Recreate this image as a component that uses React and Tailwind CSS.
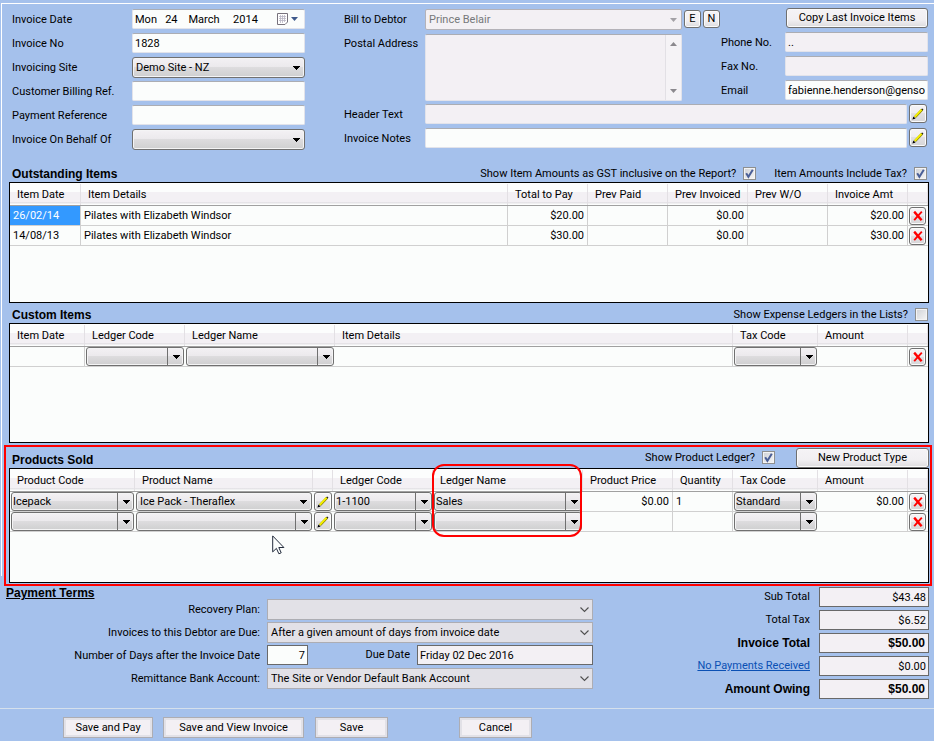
import React, { useState } from "react";

const outstandingItems = [
  { id: 1, date: "26/02/14", details: "Pilates with Elizabeth Windsor", total: "$20.00", invoiced: "$0.00", amount: "$20.00" },
  { id: 2, date: "14/08/13", details: "Pilates with Elizabeth Windsor", total: "$30.00", invoiced: "$0.00", amount: "$30.00" },
];

const products = [
  { id: 1, code: "Icepack", name: "Ice Pack -  Theraflex", ledgerCode: "1-1100", ledgerName: "Sales", price: "$0.00", quantity: "1", tax: "Standard", amount: "$0.00" },
  { id: 2, code: "", name: "", ledgerCode: "", ledgerName: "", price: "", quantity: "", tax: "", amount: "" },
];

const inputClass =
  "block h-5 w-full min-w-0 rounded-[2px] border border-[#e2e3ea] border-t-[#abadb3] px-0.5 outline-none";

const titleClass = "font-['Liberation_Sans',Arial,sans-serif] text-xs font-bold";

// Drop-down with the shaded two-tone face
const Combo = ({ id, label, value, split, tall }) => (
  <div className={`relative w-full ${tall ? "h-[21px]" : "h-[19px]"}`}>
    <select
      id={id}
      aria-label={label}
      defaultValue={value}
      className={`block h-full w-full appearance-none whitespace-pre rounded-[3px] border border-[#707070] bg-[linear-gradient(#f3f1f4_0%,#ebe9ec_49%,#dddcde_50%,#cfcfd0_100%)] shadow-[inset_0_0_0_1px_#f4f4f5] outline-none ${
        split ? "px-px" : "px-[3px]"
      }`}
    >
      <option value={value}>{value}</option>
    </select>
    <span
      className={`pointer-events-none absolute inset-y-0 right-0 flex w-[17px] items-center justify-center ${
        split ? "border-l border-[#707070]" : ""
      }`}
    >
      <svg width="7" height="4" viewBox="0 0 7 4" shapeRendering="crispEdges">
        <path d="M0 0h7v1H6v1H5v1H4v1H3V3H2V2H1V1H0z" fill="#000" />
      </svg>
    </span>
  </div>
);

// Flat grey drop-down used by the payment terms
const FlatSelect = ({ id, value }) => (
  <div className="relative h-[21px] w-[326px]">
    <select
      id={id}
      defaultValue={value}
      className="block h-full w-full appearance-none border border-[#adadb3] bg-[#e2e1e7] px-[3px] outline-none"
    >
      <option value={value}>{value}</option>
    </select>
    <svg className="pointer-events-none absolute top-[8px] right-[4px]" width="9" height="6" viewBox="0 0 9 6">
      <path d="M.5 .5l4 4 4-4" fill="none" stroke="#505050" strokeWidth="1.1" />
    </svg>
  </div>
);

const CheckBox = ({ label, checked }) => {
  const [on, setOn] = useState(checked);
  return (
    <label className="flex items-center gap-[7px]">
      {label}
      <span className="relative block h-[13px] w-[13px]">
        <input
          type="checkbox"
          checked={on}
          onChange={() => setOn(!on)}
          className="block h-full w-full appearance-none border border-[#8e8f8f] bg-[linear-gradient(135deg,#cfd1d6,#f6f6f6)] shadow-[inset_0_0_0_1px_#f4f4f4]"
        />
        {on && (
          <svg className="pointer-events-none absolute inset-0" width="13" height="13" viewBox="0 0 13 13">
            <path d="M3.2 6.2l2.2 3.6L9.8 2.8" fill="none" stroke="#4a5f97" strokeWidth="2" />
          </svg>
        )}
      </span>
    </label>
  );
};

const smallButton =
  "flex items-center justify-center rounded-[3px] border border-[#707070] bg-[linear-gradient(#f5f3f6_0%,#efedf0_49%,#e2e0e3_50%,#d6d6d8_100%)] shadow-[inset_0_0_0_1px_#fbfbfb]";

const plainButton =
  "rounded-[3px] border border-[#707070] bg-[linear-gradient(#f5f3f6_0%,#f1eff2_60%,#dddcde_100%)] shadow-[inset_0_0_0_1px_#fbfbfb]";

const EditButton = ({ label }) => (
  <button aria-label={label} className={`${smallButton} h-[19px] w-[18px] shrink-0`}>
    <svg width="12" height="12" viewBox="0 0 12 12">
      <path d="M3 9.2L10.2 1.600" stroke="#8a8400" strokeWidth="2.4" />
      <path d="M2.800 8.800L9.600 1.600" stroke="#f6f000" strokeWidth="1.800" />
      <path d="M.4 11.6l1-3 2.200 2z" fill="#000" />
      <path d="M9.800 .8l1.200 1.200" stroke="#222" strokeWidth="1.200" />
    </svg>
  </button>
);

const DeleteButton = () => (
  <button aria-label="Delete row" className={`${smallButton} mt-px h-[18px] w-[17px]`}>
    <svg width="10" height="10" viewBox="0 0 10 10">
      <path d="M1.2 .6L8.6 9.2" stroke="#ff0000" strokeWidth="2.4" />
      <path d="M8.8 .6L1.2 9.2" stroke="#ff0000" strokeWidth="1.8" />
    </svg>
  </button>
);

const Th = ({ children }) => (
  <th className="h-[23px] border-b border-[#a0a0a0] bg-[linear-gradient(#fcfdfd_0%,#fcfdfd_42%,#f3f0f4_43%,#f3f0f4_88%,#dedce0_89%,#fcfdfd_96%)] p-0 text-left font-normal">
    <div className="flex h-[21px] items-center border-r border-[#e3e0e4] pt-0.5 pl-[7px] whitespace-nowrap">{children}</div>
  </th>
);

const Td = ({ children, className = "" }) => (
  <td className={`h-5 border-r border-b border-[#d0d0d0] px-[3px] py-0 whitespace-nowrap ${className}`}>{children}</td>
);

// Cell whose control fills it from edge to edge
const ControlTd = ({ children }) => <td className="h-5 border-b border-[#d0d0d0] py-0 pr-px pl-px align-top">{children}</td>;

const Grid = ({ widths, className, children }) => (
  <div className={`overflow-hidden border border-black bg-[#fbfdfc] ${className}`}>
    <table className="w-full table-fixed border-separate border-spacing-0">
      <colgroup>
        {widths.map((w, i) => (
          <col key={i} className={w} />
        ))}
      </colgroup>
      {children}
    </table>
  </div>
);

const Field = ({ id, label, children }) => (
  <div className="flex h-6 items-start">
    <label htmlFor={id} className="w-[120px] shrink-0 leading-[22px]">
      {label}
    </label>
    <div className="relative w-[173px]">{children}</div>
  </div>
);

const InvoiceForm = () => (
  <div className="flex gap-[39px] pt-[5px] pr-[7px] pl-2.5">
    <div className="shrink-0">
      <Field id="date" label="Invoice Date">
        <input id="date" defaultValue="Mon   24    March     2014" className={`${inputClass} bg-[#fbfdfc]`} />
        <span className="pointer-events-none absolute top-[4px] right-[7px] flex items-center gap-[3px]">
          <svg width="11" height="12" viewBox="0 0 11 12">
            <path d="M.5 .5h10v8.500l-2.500 2.500H.5z" fill="#fff" stroke="#77727c" />
            <path d="M2 3.500h7M2 5.500h7M2 7.500h7M3.500 2v8M5.500 2v8M7.500 2v7" stroke="#b9b6c4" strokeWidth=".8" />
          </svg>
          <svg width="7" height="4" viewBox="0 0 7 4">
            <path d="M0 0h7L3.500 4z" fill="#3f5a8c" />
          </svg>
        </span>
      </Field>
      <Field id="number" label="Invoice No">
        <input id="number" defaultValue="1828" className={`${inputClass} bg-[#fbfdfc]`} />
      </Field>
      <Field id="site" label="Invoicing Site">
        <Combo id="site" value="Demo Site - NZ" tall />
      </Field>
      <Field id="billing" label="Customer Billing Ref.">
        <input id="billing" className={`${inputClass} bg-[#fbfdfc]`} />
      </Field>
      <Field id="payref" label="Payment Reference">
        <input id="payref" className={`${inputClass} bg-[#fbfdfc]`} />
      </Field>
      <Field id="behalf" label="Invoice On Behalf Of">
        <Combo id="behalf" value="" tall />
      </Field>
    </div>

    <div className="min-w-0 flex-1">
      <div className="flex">
        <div className="min-w-0 flex-1">
          <div className="flex h-[25px] items-start gap-0.5 pr-px">
            <label htmlFor="debtor" className="w-[79px] shrink-0 leading-[22px]">Bill to Debtor</label>
            <div className="relative min-w-0 flex-1">
              <select
                id="debtor"
                disabled
                className="block h-[21px] w-full appearance-none rounded-[2px] border border-[#b4b2b8] bg-[#f3f0f4] px-[3px] text-[#76787a] opacity-100"
              >
                <option>Prince Belair</option>
              </select>
              <svg className="absolute top-[9px] right-[5px]" width="7" height="4" viewBox="0 0 7 4">
                <path d="M0 0h7L3.500 4z" fill="#a3a1a6" />
              </svg>
            </div>
            <button className={`${plainButton} mt-px h-[18px] w-[17px] shrink-0`}>E</button>
            <button className={`${plainButton} mt-px h-[18px] w-[17px] shrink-0`}>N</button>
          </div>
          <div className="flex h-[70px] items-start pr-[39px]">
            <label htmlFor="postal" className="w-[81px] shrink-0 leading-5">Postal Address</label>
            <div className="relative h-[67px] min-w-0 flex-1">
              <textarea
                id="postal"
                readOnly
                className="block h-full w-full resize-none overflow-hidden rounded-[2px] border border-[#e2e3ea] border-t-[#abadb3] bg-[#f3f0f4] outline-none"
              />
              <div className="absolute inset-y-px right-px flex w-4 flex-col items-center justify-between border-l border-[#e2e0e5] bg-[#f5f3f6] py-[7px]">
                <svg width="7" height="4" viewBox="0 0 7 4">
                  <path d="M0 4h7L3.500 0z" fill="#8b898e" />
                </svg>
                <svg width="7" height="4" viewBox="0 0 7 4">
                  <path d="M0 0h7L3.500 4z" fill="#8b898e" />
                </svg>
              </div>
            </div>
          </div>
        </div>
        <div className="-mt-px -mr-px w-[207px] shrink-0">
          <div className="flex h-6 justify-end">
            <button className={`${plainButton} h-5 w-[142px]`}>Copy Last Invoice Items</button>
          </div>
          <div className="flex h-6 items-start">
            <label htmlFor="phone" className="w-16 shrink-0 leading-[22px]">Phone No.</label>
            <input id="phone" readOnly value=".." className={`${inputClass} bg-[#f3f0f4]`} />
          </div>
          <div className="flex h-6 items-start">
            <label htmlFor="fax" className="w-16 shrink-0 leading-[22px]">Fax No.</label>
            <input id="fax" readOnly className={`${inputClass} bg-[#f3f0f4]`} />
          </div>
          <div className="flex h-5 items-start">
            <label htmlFor="email" className="w-16 shrink-0 leading-[22px]">Email</label>
            <input id="email" defaultValue="fabienne.henderson@gensolve.com" className={`${inputClass} bg-[#fbfdfc]`} />
          </div>
        </div>
      </div>
      <div className="flex h-6 items-start">
        <label htmlFor="header" className="w-[81px] shrink-0 leading-[22px]">Header Text</label>
        <input id="header" readOnly className={`${inputClass} mr-0.5 flex-1 bg-[#f3f0f4]`} />
        <EditButton label="Edit header text" />
      </div>
      <div className="flex h-6 items-start">
        <label htmlFor="notes" className="w-[81px] shrink-0 leading-[22px]">Invoice Notes</label>
        <input id="notes" className={`${inputClass} mr-0.5 flex-1 bg-[#fbfdfc]`} />
        <EditButton label="Edit invoice notes" />
      </div>
    </div>
  </div>
);

const OutstandingItems = () => (
  <section className="mt-3 pr-[5px] pl-[7px]">
    <div className="flex h-[17px] items-center justify-between pr-0.5 pl-[3px]">
      <h2 className={titleClass}>Outstanding Items</h2>
      <div className="flex gap-[18px]">
        <CheckBox label="Show Item Amounts as GST inclusive on the Report?" checked />
        <CheckBox label="Item Amounts Include Tax?" checked />
      </div>
    </div>
    <Grid className="h-[121px]" widths={["w-[71px]", "", "w-20", "w-20", "w-20", "w-20", "w-20", "w-5"]}>
      <thead>
        <tr>
          <Th>Item Date</Th>
          <Th>Item Details</Th>
          <Th>Total to Pay</Th>
          <Th>Prev Paid</Th>
          <Th>Prev Invoiced</Th>
          <Th>Prev W/O</Th>
          <Th>Invoice Amt</Th>
          <Th />
        </tr>
      </thead>
      <tbody>
        {outstandingItems.map((row, idx) => (
          <tr key={row.id}>
            <Td className={idx === 0 ? "bg-[#3399ff] text-white" : ""}>{row.date}</Td>
            <Td>{row.details}</Td>
            <Td className="text-right">{row.total}</Td>
            <Td />
            <Td className="text-right">{row.invoiced}</Td>
            <Td />
            <Td className="text-right">{row.amount}</Td>
            <ControlTd><DeleteButton /></ControlTd>
          </tr>
        ))}
      </tbody>
    </Grid>
  </section>
);

const CustomItems = () => (
  <section className="mt-[3px] pr-[5px] pl-[7px]">
    <div className="flex h-[17px] items-center justify-between pr-px pl-[3px]">
      <h2 className={titleClass}>Custom Items</h2>
      <CheckBox label="Show Expense Ledgers in the Lists?" checked={false} />
    </div>
    <Grid className="h-[120px]" widths={["w-[75px]", "w-[100px]", "w-[150px]", "", "w-[85px]", "w-[90px]", "w-5"]}>
      <thead>
        <tr>
          <Th>Item Date</Th>
          <Th>Ledger Code</Th>
          <Th>Ledger Name</Th>
          <Th>Item Details</Th>
          <Th>Tax Code</Th>
          <Th>Amount</Th>
          <Th />
        </tr>
      </thead>
      <tbody>
        <tr>
          <Td />
          <ControlTd><Combo label="Ledger code" value="" split /></ControlTd>
          <ControlTd><Combo label="Ledger name" value="" split /></ControlTd>
          <Td />
          <ControlTd><Combo label="Tax code" value="" split /></ControlTd>
          <Td />
          <ControlTd><DeleteButton /></ControlTd>
        </tr>
      </tbody>
    </Grid>
  </section>
);

const ProductsSold = () => (
  <section className="relative mx-0.5 mt-0.5 -mb-2.5 border-2 border-[#ff0000] pr-px pb-px pl-[3px]">
    <div className="flex h-[21px] items-center justify-between pl-[3px]">
      <h2 className={`pt-1 ${titleClass}`}>Products Sold</h2>
      <div className="flex items-center gap-[21px]">
        <CheckBox label="Show Product Ledger?" checked />
        <button className={`${plainButton} h-5 w-[133px]`}>New Product Type</button>
      </div>
    </div>
    <Grid
      className="h-[115px]"
      widths={["w-[125px]", "", "w-5", "w-[100px]", "w-[150px]", "w-[90px]", "w-[60px]", "w-[85px]", "w-[90px]", "w-5"]}
    >
      <thead>
        <tr>
          <Th>Product Code</Th>
          <Th>Product Name</Th>
          <Th />
          <Th>Ledger Code</Th>
          <Th>Ledger Name</Th>
          <Th>Product Price</Th>
          <Th>Quantity</Th>
          <Th>Tax Code</Th>
          <Th>Amount</Th>
          <Th />
        </tr>
      </thead>
      <tbody>
        {products.map((row) => (
          <tr key={row.id}>
            <ControlTd><Combo label="Product code" value={row.code} split /></ControlTd>
            <ControlTd><Combo label="Product name" value={row.name} split={!row.name} /></ControlTd>
            <ControlTd><EditButton label="Edit product" /></ControlTd>
            <ControlTd><Combo label="Ledger code" value={row.ledgerCode} split /></ControlTd>
            <ControlTd><Combo label="Ledger name" value={row.ledgerName} split /></ControlTd>
            <Td className="text-right">{row.price}</Td>
            <Td>{row.quantity}</Td>
            <ControlTd><Combo label="Tax code" value={row.tax} split /></ControlTd>
            <Td className="text-right">{row.amount}</Td>
            <ControlTd><DeleteButton /></ControlTd>
          </tr>
        ))}
      </tbody>
    </Grid>

    {/* highlight round the ledger name column */}
    <div className="pointer-events-none absolute top-[17px] right-[348px] h-[73px] w-[150px] rounded-xl border-2 border-[#ff0000]" />
    <svg className="pointer-events-none absolute top-[88px] left-[266px]" width="13" height="20" viewBox="0 0 13 20">
      <path d="M.7 .9v16l3.700-3.500 2.500 5.400 2.300-1L6.800 12.500h5.100z" fill="#fbfdfc" stroke="#222b3c" strokeWidth="1" />
    </svg>
  </section>
);

const TermLabel = ({ id, children }) => (
  <label htmlFor={id} className="w-[254px] shrink-0 text-right leading-[22px]">
    {children}
  </label>
);

const totals = [
  { label: "Sub Total", value: "$43.48" },
  { label: "Total Tax", value: "$6.52" },
  { label: "Invoice Total", value: "$50.00", bold: true },
  { label: "No Payments Received", value: "$0.00", link: true },
  { label: "Amount Owing", value: "$50.00", bold: true },
];

const PaymentTerms = () => (
  <div className="mt-[11px] flex justify-between pr-[5px] pl-1.5">
    <section>
      <h2 className={`h-3 leading-3 underline ${titleClass}`}>Payment Terms</h2>
      <div className="flex h-[23px] gap-[7px]">
        <TermLabel id="plan">Recovery Plan:</TermLabel>
        <FlatSelect id="plan" value="" />
      </div>
      <div className="flex h-[23px] gap-[7px]">
        <TermLabel id="due">Invoices to this Debtor are Due:</TermLabel>
        <FlatSelect id="due" value="After a given amount of days from invoice date" />
      </div>
      <div className="flex h-[23px] gap-[7px]">
        <TermLabel id="days">Number of Days after the Invoice Date</TermLabel>
        <input id="days" defaultValue="7" className="h-5 w-[41px] border border-[#696969] bg-[#fbfdfc] px-0.5 text-right outline-none" />
        <label htmlFor="duedate" className="w-[95px] text-right leading-5">Due Date</label>
        <input id="duedate" defaultValue="Friday 02 Dec 2016" className="h-5 w-[176px] border border-[#696969] bg-[#f3f0f4] px-0.5 outline-none" />
      </div>
      <div className="flex h-[23px] gap-[7px]">
        <TermLabel id="bank">Remittance Bank Account:</TermLabel>
        <FlatSelect id="bank" value="The Site or Vendor Default Bank Account" />
      </div>
    </section>
    <section>
      {totals.map((t) => (
        <div key={t.label} className={`flex h-[23px] justify-end gap-[9px] ${t.bold ? titleClass : ""}`}>
          {t.link ? (
            <a href="#payments" className="leading-5 text-[#0a50b4] underline">{t.label}</a>
          ) : (
            <label htmlFor={t.label} className="leading-5">{t.label}</label>
          )}
          <input
            id={t.label}
            aria-label={t.label}
            readOnly
            value={t.value}
            className={`h-5 w-[110px] border border-[#696969] bg-[#f3f0f4] text-right outline-none ${t.bold ? "pr-[3px]" : "pr-0.5"}`}
          />
        </div>
      ))}
    </section>
  </div>
);

const footerButton = "h-[21px] border border-[#adadb3] bg-[#f3f0f4] shadow-[inset_0_0_0_2px_#e2e1e7]";

const App = () => {
  return (
    <main className="flex min-h-screen flex-col bg-[#a5c1ec] font-['Roboto','Liberation_Sans',sans-serif] text-[11px] leading-4 text-black">
      <div className="mt-[3px] ml-px flex flex-col border-t border-l border-white">
        <InvoiceForm />
        <OutstandingItems />
        <CustomItems />
        <ProductsSold />
      </div>
      <PaymentTerms />
      <footer className="mt-1.5 flex border-t border-[#d5e0ec] pt-2 pb-[3px] pl-[63px]">
        <button className={`${footerButton} mr-2.5 w-[90px]`}>Save and Pay</button>
        <button className={`${footerButton} mr-[11px] w-[141px]`}>Save and View Invoice</button>
        <button className={`${footerButton} mr-[71px] w-[73px]`}>Save</button>
        <button className={`${footerButton} w-[73px]`}>Cancel</button>
      </footer>
    </main>
  );
};

export default App;
